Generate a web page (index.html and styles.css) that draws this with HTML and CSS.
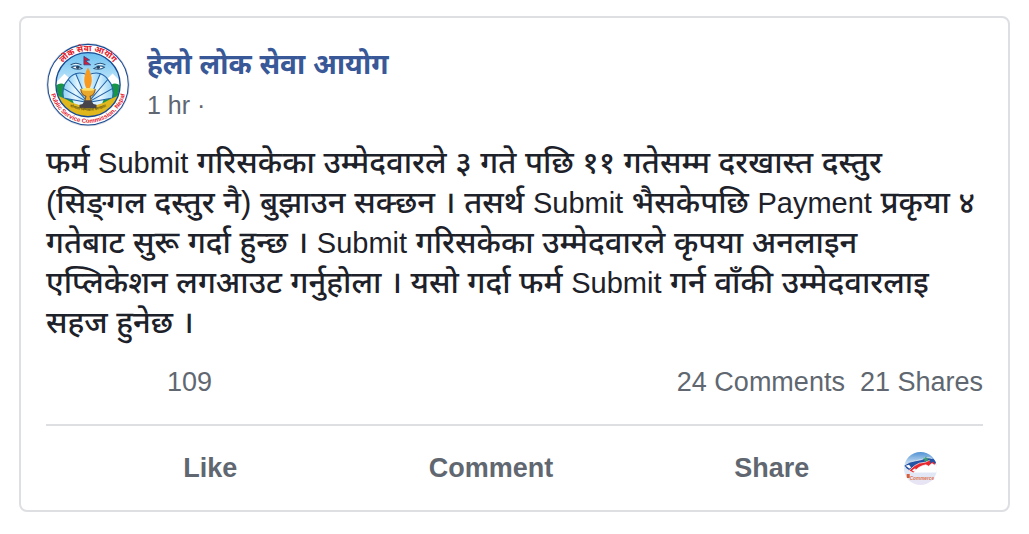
FILE: index.html
```
<!DOCTYPE html>
<html lang="hi">
<head>
    <meta charset="UTF-8">
    <meta name="viewport" content="width=device-width, initial-scale=1.0">
    <title>हेलो लोक सेवा आयोग</title>
    <link rel="stylesheet" href="styles.css">
</head>
<body>
    <article class="post">
        <header class="post-header">
            <svg class="avatar" viewBox="24 26 246 246" aria-hidden="true">
                <defs>
                    <clipPath id="inner"><circle cx="147" cy="148" r="93"/></clipPath>
                    <linearGradient id="sky" x1="0" y1="0" x2="0" y2="1">
                        <stop offset="0" stop-color="#6cc0f0"/>
                        <stop offset="0.6" stop-color="#d9f1fc"/>
                    </linearGradient>
                    <linearGradient id="petal" x1="0" y1="0" x2="1" y2="0">
                        <stop offset="0" stop-color="#8fd2f5"/>
                        <stop offset="0.5" stop-color="#e8f7fe"/>
                        <stop offset="1" stop-color="#8fd2f5"/>
                    </linearGradient>
                    <path id="topArc" d="M49 148a98 98 0 0 1 196 0"/>
                    <path id="bottomArc" d="M35 148a112 112 0 0 0 224 0"/>
                    <path id="bandArc" d="M76 203Q147 246 218 203"/>
                </defs>
                <circle cx="147" cy="148" r="122" fill="#d5d8de"/>
                <circle cx="147" cy="148" r="118" fill="#fff" stroke="#174a93" stroke-width="3"/>
                <circle cx="147" cy="148" r="94" fill="url(#sky)"/>
                <g clip-path="url(#inner)">
                    <path d="M50 146l28-30 16 15 14-10 12 20h56l12-20 14 12 17-18 30 31v35H50z" fill="#fff"/>
                    <path d="M50 152q24-18 38 8l18 44H50zM244 152q-24-18-38 8l-18 44h56z" fill="#199548"/>
                    <g fill="url(#petal)" stroke="#2463a8" stroke-width="3">
                        <path d="M147 200L75 187q-3-14 0-28l24-5z"/>
                        <path d="M147 200l72-13q3-14 0-28l-24-5z"/>
                        <path d="M147 200L75 159q2-14 14-26l24-4z"/>
                        <path d="M147 200l72-41q-2-14-14-26l-24-4z"/>
                        <path d="M147 200L89 133q7-12 22-17l16 0z"/>
                        <path d="M147 200l58-67q-7-12-22-17l-16 0z"/>
                        <path d="M147 200l-36-84q15-6 36 4 21-10 36-4z"/>
                    </g>
                    <path d="M50 177q28 10 51 24 46 20 92 0 23-14 51-24v45q-97 46-194 0z" fill="#e0b71c"/>
                    <path d="M52 214q95 44 190 0v40H52z" fill="#e0b71c"/>
                </g>
                <circle cx="147" cy="148" r="94" fill="none" stroke="#174a93" stroke-width="4"/>
                <path d="M147 98c16 28 12 49 4 62h-8c-8-13-12-34 4-62z" fill="#f79a1f"/>
                <path d="M126 162h42q-2 17-15 20l4 17h-20l4-17q-14-5-15-20z" fill="#e9a92c" stroke="#89551c" stroke-width="3"/>
                <ellipse cx="147" cy="162" rx="20" ry="4" fill="#ffe26a"/>
                <path d="M138 194h18l7 11 9 2v10h-50v-10l9-2z" fill="#46434b"/>
                <path d="M135 90V65l17 11-12 2 15 12z" fill="#d21f36" stroke="#243b86" stroke-width="2"/>
                <path d="M96 90q15-10 32 0M99 97q15-9 31 4-19 5-31-4zM166 90q17-10 32 0M164 101q16-13 31-4-12 9-31 4z" fill="#fff" stroke="#28547d" stroke-width="3"/>
                <circle cx="117" cy="97" r="5" fill="#244264"/>
                <circle cx="177" cy="97" r="5" fill="#244264"/>
                <text class="seal-top"><textPath href="#topArc" startOffset="50%">लोक सेवा आयोग</textPath></text>
                <text class="seal-bottom"><textPath href="#bottomArc" startOffset="50%">Public Service Commission, Nepal</textPath></text>
                <text class="seal-band"><textPath href="#bandArc" startOffset="50%">योग्यता निष्पक्षता स्वच्छता</textPath></text>
            </svg>
            <div class="post-meta">
                <a class="page-name" href="#">हेलो लोक सेवा आयोग</a>
                <span class="post-time">1 hr ·</span>
            </div>
        </header>

        <p class="post-text">फर्म <span class="latin">Submit</span> गरिसकेका उम्मेदवारले ३ गते पछि ११ गतेसम्म दरखास्त दस्तुर (सिङ्&zwnj;गल दस्तुर नै) बुझाउन सक्छन । तसर्थ <span class="latin">Submit</span> भैसकेपछि <span class="latin">Payment</span> प्रकृया ४ गतेबाट सुरू गर्दा हुन्छ । <span class="latin">Submit</span> गरिसकेका उम्मेदवारले कृपया अनलाइन एप्लिकेशन लगआउट गर्नुहोला । यसो गर्दा फर्म <span class="latin">Submit</span> गर्न वाँकी उम्मेदवारलाइ सहज हुनेछ ।</p>

        <div class="post-stats">
            <span class="reactions">109</span>
            <span>24 Comments</span>
            <span>21 Shares</span>
        </div>

        <div class="post-actions">
            <button type="button">Like</button>
            <button type="button">Comment</button>
            <button type="button">Share</button>
            <div class="share-as">
                <svg class="share-avatar" viewBox="29 27 98 98" aria-hidden="true">
                    <defs>
                        <clipPath id="round"><circle cx="78" cy="76" r="49"/></clipPath>
                        <linearGradient id="haze" x1="0" y1="0" x2="0" y2="1">
                            <stop offset="0" stop-color="#4f92d4"/>
                            <stop offset="0.4" stop-color="#dceaf7"/>
                            <stop offset="1" stop-color="#e9e4f4"/>
                        </linearGradient>
                    </defs>
                    <g clip-path="url(#round)">
                        <path d="M29 27h98v98H29z" fill="url(#haze)"/>
                        <path d="M58 84l40-26 29 8v22H52z" fill="#fff"/>
                        <path d="M29 67q18-13 35-14 17-2 31-9 14-1 19 5l-15 11q-26 2-50 24-14-4-20-17z" fill="#2353a5" stroke="#fff" stroke-width="2"/>
                        <path d="M34 68l10-3 6 8-5 3z" fill="#fff"/>
                        <path d="M44 82q18-18 31-22 20-1 31-9l10 3 9 2-5 10-8-5-10 8-8-4q-22 3-37 24z" fill="#e7262d" stroke="#fff" stroke-width="2"/>
                        <path d="M53 81l9-6 3 6-8 4z" fill="#fff"/>
                        <path d="M104 48l12-1 9 8-3 8-7-7-7 5z" fill="#2353a5"/>
                        <path d="M84 43l6 3 5-7 1 8 8-2-6 5 5 4-9-1-5 3 1-7z" fill="#3da269"/>
                        <path d="M37 92h9v12h-9z" fill="#d75c38"/>
                    </g>
                    <text class="brand" x="46" y="109">Commerce</text>
                </svg>
            </div>
        </div>
    </article>
</body>
</html>
```
FILE: styles.css
```
* {
    margin: 0;
    padding: 0;
    box-sizing: border-box;
}

body {
    font-family: "Liberation Sans", "Noto Sans Devanagari", "Noto Sans", sans-serif;
    background: #fff;
    color: #1d2129;
    padding: 16px 19px;
}

.post {
    border: 2px solid #dddfe2;
    border-radius: 8px;
    padding: 25px 25px 0;
}

.post-header {
    display: flex;
    align-items: center;
    gap: 17px;
}

.avatar {
    width: 84px;
    height: 84px;
    flex: none;
}

.seal-top,
.seal-bottom,
.seal-band {
    font-weight: bold;
    text-anchor: middle;
}

.seal-top {
    font-size: 25px;
    fill: #e3202b;
}

.seal-bottom {
    font-size: 18px;
    fill: #e3202b;
}

.seal-band {
    font-size: 11px;
    fill: #6b5a16;
}

.post-meta {
    display: flex;
    flex-direction: column;
}

.page-name {
    font-size: 28px;
    font-weight: bold;
    line-height: 40px;
    color: #385898;
    text-decoration: none;
}

.post-time {
    font-size: 25px;
    line-height: 40px;
    color: #616770;
}

.post-text {
    margin-top: 16px;
    font-size: 31px;
    font-weight: 500;
    line-height: 40px;
}

.latin {
    font-size: 29px;
    font-weight: 400;
    line-height: 1;
}

.post-stats {
    display: flex;
    gap: 15px;
    padding: 21px 0 24px;
    font-size: 27px;
    line-height: 36px;
    color: #606770;
    border-bottom: 2px solid #dddfe2;
}

.reactions {
    flex: 1;
    padding-left: 121px;
}

.post-actions {
    display: flex;
    align-items: center;
    padding: 25px 0;
}

.post-actions button {
    flex: 1;
    padding-left: 48px;
    font-family: inherit;
    font-size: 27px;
    font-weight: bold;
    line-height: 34px;
    color: #606770;
    background: none;
    border: none;
    cursor: pointer;
}

.share-as {
    flex: 0 0 95px;
    padding-left: 16px;
}

.share-avatar {
    display: block;
    width: 33px;
    height: 33px;
}

.brand {
    font-size: 14px;
    font-style: italic;
    font-weight: bold;
    fill: #dd7650;
}
```
